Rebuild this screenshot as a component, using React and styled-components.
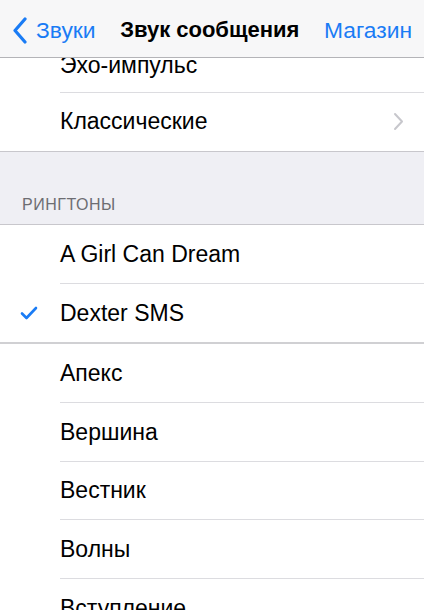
import React from 'react';
import styled, { createGlobalStyle } from 'styled-components';

const GlobalStyle = createGlobalStyle`
  html, body {
    margin: 0;
    padding: 0;
    background: #ffffff;
    font-family: "Liberation Sans", Arial, sans-serif;
    -webkit-font-smoothing: antialiased;
  }
`;

const Screen = styled.div`
  width: 424px;
  height: 610px;
  overflow: hidden;
  display: flex;
  flex-direction: column;
  background: #efeff4;
`;

const NavBar = styled.div`
  flex: 0 0 auto;
  height: 58px;
  padding: 3px 12px 0;
  box-sizing: border-box;
  display: flex;
  align-items: center;
  justify-content: space-between;
  background: #f7f7f8;
  border-bottom: 1px solid #b4b4b8;
  position: relative;
  z-index: 2;
`;

const NavButton = styled.div`
  display: flex;
  align-items: center;
  gap: 8px;
  color: #1a7cf5;
  font-size: 22.8px;
`;

const NavTitle = styled.div`
  color: #000;
  font-size: 22px;
  font-weight: bold;
`;

const Scroll = styled.div`
  flex: 1 1 auto;
  overflow: hidden;
`;

const Content = styled.div`
  margin-top: -24px;
`;

const Group = styled.div`
  background: #ffffff;
  border-bottom: ${p => (p.$thick ? '2px solid #d0d0d3' : '1px solid #c8c7cc')};
`;

const Row = styled.div`
  height: 58.6px;
  box-sizing: border-box;
  display: flex;
  align-items: center;
  position: relative;
  padding-left: 60px;
  padding-right: 20px;
  font-size: 23px;
  color: #000;
  padding-top: ${p => (p.$clipped ? '4px' : '0')};
  &:not(:last-child)::after {
    content: '';
    position: absolute;
    left: 60px;
    right: 0;
    bottom: 0;
    height: 1px;
    background: #dcdce0;
  }
`;

const Label = styled.span`
  flex: 1;
`;

const Check = styled.span`
  position: absolute;
  left: 20px;
  top: 50%;
  transform: translateY(-50%);
  display: flex;
`;

const SectionHeader = styled.div`
  height: 73px;
  box-sizing: border-box;
  display: flex;
  align-items: flex-end;
  padding: 0 22px 10px;
  font-size: 16px;
  color: #6d6d72;
  letter-spacing: 0.5px;
  border-bottom: 1px solid #c8c7cc;
`;

const BackIcon = () => (
  <svg width="16" height="27" viewBox="0 0 16 27">
    <polyline points="13,2 3,13.5 13,25" fill="none" stroke="#1a7cf5" strokeWidth="3.2" strokeLinecap="round" strokeLinejoin="round" />
  </svg>
);

const Chevron = () => (
  <svg width="11" height="19" viewBox="0 0 11 19">
    <polyline points="2,2 9,9.5 2,17" fill="none" stroke="#c7c7cc" strokeWidth="2" strokeLinecap="round" strokeLinejoin="round" />
  </svg>
);

const CheckIcon = () => (
  <svg width="18" height="14" viewBox="0 0 18 14">
    <polyline points="2,7.5 6.5,12 16,2" fill="none" stroke="#1a7cf5" strokeWidth="2.6" strokeLinecap="round" strokeLinejoin="round" />
  </svg>
);

const tones = ['Апекс', 'Вершина', 'Вестник', 'Волны', 'Вступление'];

export default function App() {
  return (
    <Screen>
      <GlobalStyle />
      <NavBar>
        <NavButton>
          <BackIcon />
          Звуки
        </NavButton>
        <NavTitle>Звук сообщения</NavTitle>
        <NavButton>Магазин</NavButton>
      </NavBar>
      <Scroll>
        <Content>
          <Group>
            <Row $clipped><Label>Эхо-импульс</Label></Row>
            <Row>
              <Label>Классические</Label>
              <Chevron />
            </Row>
          </Group>
          <SectionHeader>РИНГТОНЫ</SectionHeader>
          <Group $thick>
            <Row><Label>A Girl Can Dream</Label></Row>
            <Row>
              <Check><CheckIcon /></Check>
              <Label>Dexter SMS</Label>
            </Row>
          </Group>
          <Group>
            {tones.map(t => (
              <Row key={t}><Label>{t}</Label></Row>
            ))}
          </Group>
        </Content>
      </Scroll>
    </Screen>
  );
}
